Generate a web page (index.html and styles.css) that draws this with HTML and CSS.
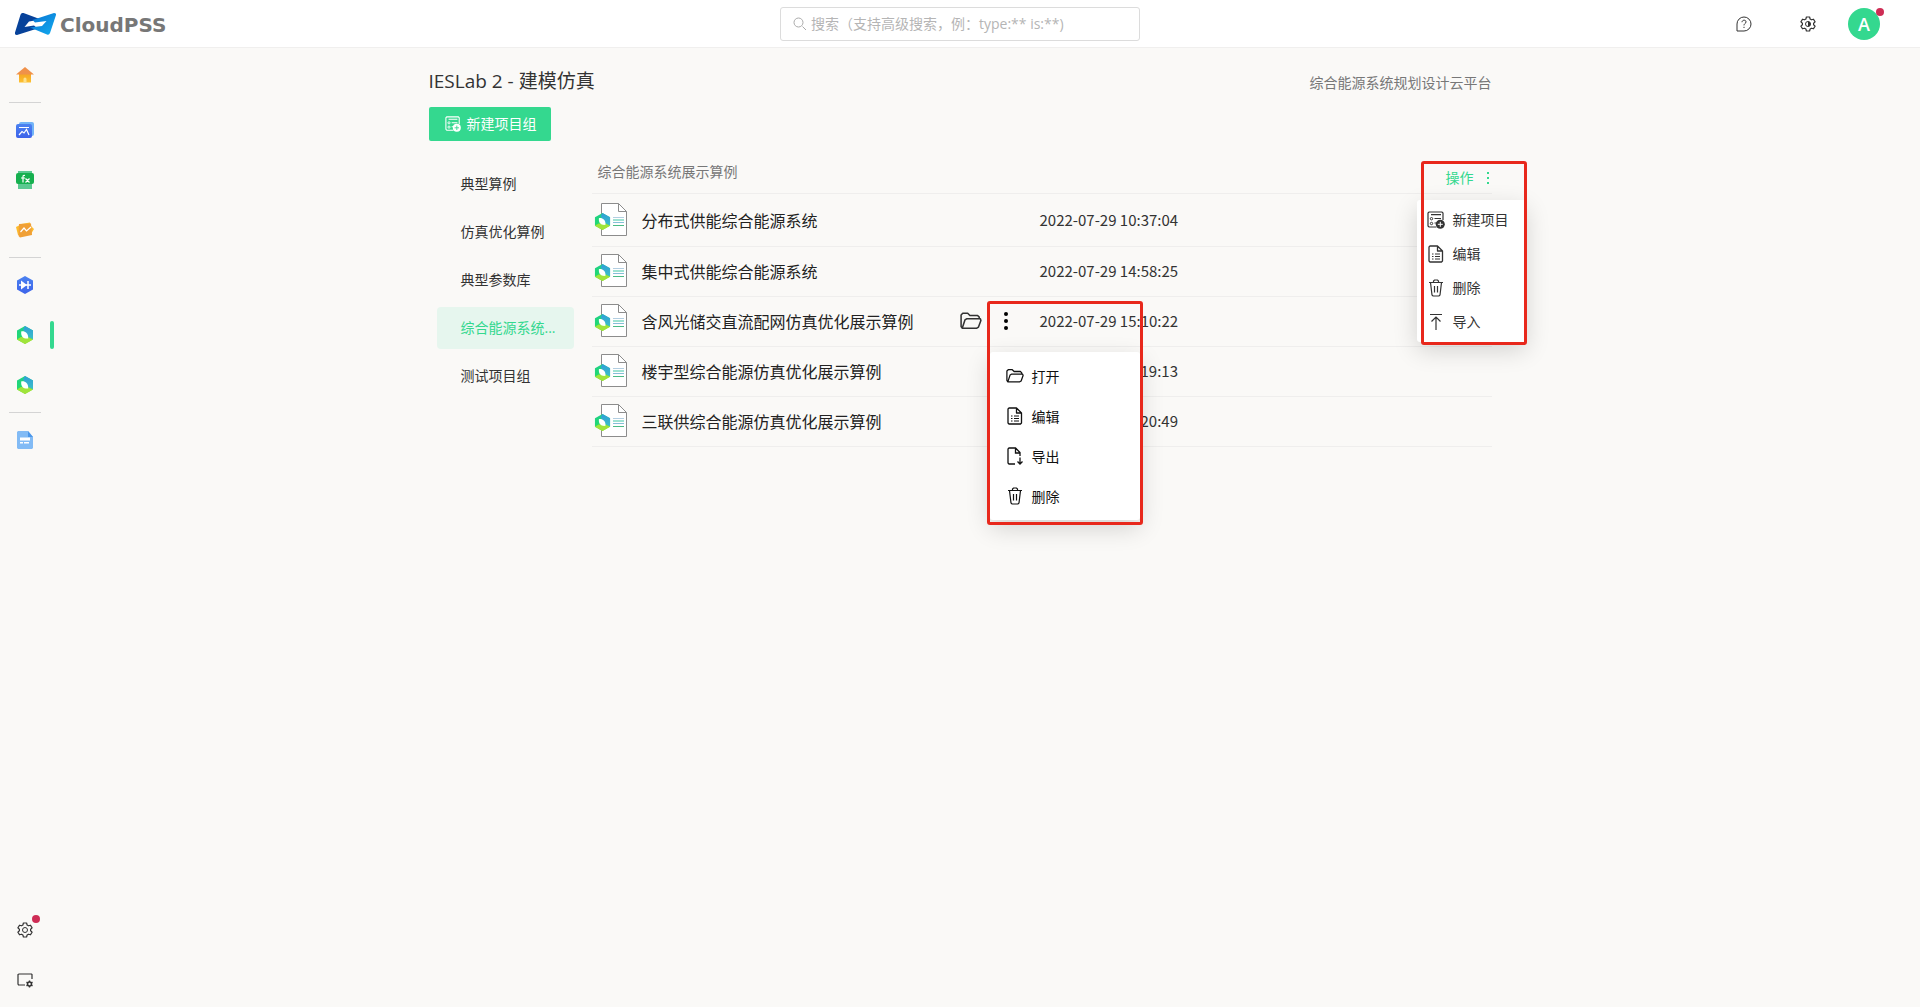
FILE: index.html
```html
<!DOCTYPE html>
<html lang="zh-CN">
<head>
<meta charset="utf-8">
<title>CloudPSS - IESLab 2</title>
<link rel="stylesheet" href="styles.css">
</head>
<body>
<svg class="defs" aria-hidden="true">
  <defs>
    <linearGradient id="leafL" x1="0" y1="0" x2="0.3" y2="1"><stop offset="0" stop-color="#1fd08a"/><stop offset=".6" stop-color="#22d873"/><stop offset="1" stop-color="#8be03a"/></linearGradient>
    <linearGradient id="leafR" x1="0" y1="0" x2="0" y2="1"><stop offset="0" stop-color="#2e9fd8"/><stop offset="1" stop-color="#3cbfc6"/></linearGradient>
    <linearGradient id="house" x1="0" y1="0" x2="0" y2="1"><stop offset="0" stop-color="#f5a623"/><stop offset="1" stop-color="#fdc131"/></linearGradient>
    <linearGradient id="blue" x1="0" y1="0" x2="0" y2="1"><stop offset="0" stop-color="#4b82f0"/><stop offset="1" stop-color="#3d63ea"/></linearGradient>
    <linearGradient id="cyan" x1="0" y1="0" x2="1" y2="1"><stop offset="0" stop-color="#0a6fd0"/><stop offset="1" stop-color="#12aef0"/></linearGradient>
    <symbol id="i-leaf" viewBox="0 0 18 18"><path d="M9 0 17 4.600V13.400L9 18 1 13.400V4.600z" fill="url(#leafL)"/><path d="M9 0 17 4.600V13.400L11 10 7 3.500z" fill="url(#leafR)"/><path d="M1 13.400 5 11l7 .5 5 1.900L9 18z" fill="#a0e43a"/><path d="M5.200 5.500c3.500-.7 7.300 1.500 7 7-4.500.5-7.500-1.500-7-7z" fill="#fff"/></symbol>
    <symbol id="i-file" viewBox="0 0 34 34"><path d="M7.500.5h17l8 8v24h-25z" fill="#fff" stroke="#8c8c8c"/><path d="M24.500.5v8h8" fill="none" stroke="#8c8c8c"/><path d="M19 14.500h11" stroke="#b3cfe2"/><path d="M19 17h11" stroke="#9fe3d2" stroke-width="2"/><path d="M19 19.500h11" stroke="#86bfd8"/><path d="M19 22.500h11" stroke="#4cbb86"/><use href="#i-leaf" x="0" y="10" width="17" height="17"/></symbol>
    <symbol id="i-folder" viewBox="0 0 20 16"><path d="M2 14.500 1 13V2.500L2.500 1H7l2 2h7l1.500 1.500V6M2 14.500 4.500 7 6 6h12.500l.5 1.500-2.200 6-1.500 1H2z" fill="none" stroke="currentColor" stroke-width="1.400" stroke-linejoin="round"/></symbol>
    <symbol id="i-edit" viewBox="0 0 16 18"><path d="M2 1h7.500L14.500 6v10l-1 1H2l-1-1V2z M9.500 1v5h5" fill="none" stroke="currentColor" stroke-width="1.300" stroke-linejoin="round"/><path d="M4 9h1.500M7 9h5M4 11.500h1.500M7 11.500h5M4 14h1.500M7 14h5" stroke="currentColor"/></symbol>
    <symbol id="i-export" viewBox="0 0 16 18"><path d="M8 17H2l-1-1V2l1-1h6.500L13 5.500V9M8.500 1v5H13M13 10.500V17M10.500 14.500 13 17l2.500-2.500" fill="none" stroke="currentColor" stroke-width="1.300"/></symbol>
    <symbol id="i-trash" viewBox="0 0 16 18"><path d="M1 3.500h14M5.500 3.500V2l1-1h3l1 1v1.500M2.500 3.500 4 16l1 1h6l1-1 1.500-12.500M6.500 7v6.500M9.500 7v6.500" fill="none" stroke="currentColor" stroke-width="1.200"/></symbol>
    <symbol id="i-import" viewBox="0 0 16 18"><path d="M2 1.500h12M8 17V4M3.500 8.500 8 4l4.500 4.500" fill="none" stroke="currentColor" stroke-width="1.200"/></symbol>
    <symbol id="i-new" viewBox="0 0 18 18"><path d="M9.500 16H2l-1-1V2l1-1h13l1 1v7M4 3.700h10M7.500 7.500H14M7.500 12H10" fill="none" stroke="currentColor" stroke-width="1.200"/><circle cx="4.500" cy="7.700" r="1.200" fill="none" stroke="currentColor"/><circle cx="4.500" cy="12.500" r="1.200" fill="none" stroke="currentColor"/><circle cx="13.300" cy="13.300" r="4.500" fill="currentColor"/></symbol>
    <symbol id="i-gear" viewBox="0 0 16 16"><path d="M6.400 1h3.200l.5 2 1.400.8 2-.6 1.600 2.700-1.500 1.400v1.400l1.500 1.400-1.600 2.700-2-.6-1.400.8-.5 2H6.400l-.5-2-1.400-.8-2 .6L.9 10.100l1.500-1.400V7.300L.9 5.900l1.600-2.700 2 .6L5.900 3z" fill="none" stroke="currentColor" stroke-width="1.200" stroke-linejoin="round"/><circle cx="8" cy="8" r="2.500" fill="none" stroke="currentColor"/></symbol>
  </defs>
</svg>

<header class="topbar">
  <a class="brand" href="#">
    <svg class="brand-mark" viewBox="0 0 41 22"><path d="M8.500 0 26 6.500 14 8.500 9.500 14 19 12.500 22.500 15.500 2 22Q-.5 22 0 19.500L5.500 1.800Q6.500-.4 8.500 0z" fill="#07429a"/><path d="M39 0Q41.500 0 41 2L35 20Q34 22.500 32 21.500L15 14.500 27 13 31.500 8 20 9.500 17.500 7z" fill="url(#cyan)"/></svg>
    <span class="brand-word">CloudPSS</span>
  </a>
  <label class="search"><svg viewBox="0 0 14 14"><path d="M9.500 9.500 13 13" stroke="currentColor"/><circle cx="5.500" cy="5.500" r="4.500" fill="none" stroke="currentColor"/></svg><input type="search" aria-label="搜索" placeholder="搜索（支持高级搜索，例：type:** is:**)"></label>
  <div class="tools">
    <button class="tool" aria-label="帮助"><svg viewBox="0 0 16 16"><path d="M1 15V8a7 7 0 1 1 7 7z" fill="none" stroke="currentColor"/><path d="M6 6.200C6 3.500 10.200 3.600 10 6c-.1 1.500-2 1.500-2 3.400M8 10.800V12" fill="none" stroke="currentColor"/></svg></button>
    <button class="tool" aria-label="主题"><svg viewBox="0 0 16 16"><use href="#i-gear"/><path d="M8 5.500a2.500 2.500 0 0 1 0 5z" fill="currentColor"/></svg></button>
    <button class="avatar" aria-label="账户">A<i class="badge"></i></button>
  </div>
</header>

<div class="shell">
  <nav class="rail" aria-label="应用">
    <a href="#" aria-label="首页"><svg viewBox="0 0 18 18"><path d="M3 8h12v8.500H3z" fill="url(#house)"/><path d="M9 1 18 8.500H0z" fill="#f0914a"/><path d="M7.500 16.500V13a1.500 1.500 0 0 1 3 0v3.500z" fill="#fde08a"/></svg></a>
    <hr>
    <a href="#" aria-label="模型"><svg viewBox="0 0 18 18"><rect x="3" y="1" width="15" height="14" rx="2" fill="#72b4f7"/><rect y="3" width="16" height="14" rx="2" fill="url(#blue)"/><path d="M3 6.500h10M3 14l3-3.500 2 1.500 2.500-3.500 2.500 5.500" fill="none" stroke="#fff" stroke-width="1.200"/></svg></a>
    <a href="#" aria-label="函数"><svg viewBox="0 0 18 18"><path d="M2 0h14v18H2z" fill="#5bc991"/><rect y="2" width="18" height="11" rx="2" fill="#16b04f"/><path d="M9 4.500C7 4 7 5 7 6v5.500M5 7h4M9.500 7.500l4 4M13.500 7.500l-4 4" fill="none" stroke="#fff" stroke-width="1.200"/></svg></a>
    <a href="#" aria-label="数据"><svg viewBox="0 0 18 18"><path d="M5 3 14 1.500 15 5 18 8 15 13 5 15z" fill="#fdbb2c"/><path d="M0 6 3 4.500 4 14 2 14z" fill="#fdbb2c"/><path d="M3 3 15 2.500 16 14 4 16.500 2.500 15z" fill="#f0a036"/><path d="M4.500 11l3.500-4L10.500 10l4.500-4" fill="none" stroke="#fff" stroke-width="1.200"/></svg></a>
    <hr>
    <a href="#" aria-label="EMTLab"><svg viewBox="0 0 18 18"><path d="M9 0 17 4.600v8.800L9 18 1 13.400V4.600z" fill="url(#blue)"/><path d="M5 4.500 11 9l-6 4.500z" fill="#fff"/><path d="M3 9h12M12 5v8" stroke="#fff" stroke-width="1.500"/></svg></a>
    <a href="#" class="current" aria-label="IESLab 建模仿真" aria-current="page"><svg><use href="#i-leaf"/></svg></a>
    <a href="#" aria-label="IESLab 规划设计"><svg><use href="#i-leaf"/></svg></a>
    <hr>
    <a href="#" aria-label="文档"><svg viewBox="0 0 18 18"><path d="M2 0h10l5 6v11l-1 1H2l-1-1V1z" fill="#82bbf5"/><path d="M12 0v6h5z" fill="#4c97ea"/><path d="M4 8h10" stroke="#fff" stroke-width="3"/><path d="M4 11.800h3M8 11.800h5" stroke="#fff" stroke-width="1.500"/></svg></a>
    <a href="#" class="bottom" aria-label="设置"><svg class="line" viewBox="0 0 16 16"><use href="#i-gear"/></svg><i class="badge"></i></a>
    <a href="#" aria-label="工作区"><svg class="line" viewBox="0 0 16 16"><path d="M8 13H1.500L1 12V2.500L2 2h12.500l.5.500V7" fill="none" stroke="currentColor" stroke-width="1.200"/><circle cx="12.500" cy="12" r="2" fill="none" stroke="currentColor" stroke-width="1.600"/><path d="M12.500 8.500v1.500M12.500 14v1.500M9.500 10.200l1.300.8M14.200 13l1.300.8M9.500 13.800l1.300-.8M14.200 11l1.300-.8" stroke="currentColor" stroke-width="1.400"/></svg></a>
  </nav>

  <main class="page">
    <div class="page-head"><h1>IESLab 2 - 建模仿真</h1><p>综合能源系统规划设计云平台</p></div>
    <button class="primary"><svg viewBox="0 0 18 18"><use href="#i-new"/><path d="M10.800 13.300h5M13.300 10.800v5" stroke="#34d88f"/></svg>新建项目组</button>
    <div class="columns">
      <nav class="groups" aria-label="项目组">
        <a href="#">典型算例</a>
        <a href="#">仿真优化算例</a>
        <a href="#">典型参数库</a>
        <a href="#" class="selected">综合能源系统...</a>
        <a href="#">测试项目组</a>
      </nav>
      <section class="list">
        <div class="list-head">
          <h2>综合能源系统展示算例</h2>
          <div class="ops">
            <button class="ops-button">操作<svg viewBox="0 0 4 14"><path d="M1 1h2v2H1zM1 6h2v2H1zM1 11h2v2H1z" fill="currentColor"/></svg></button>
            <div class="ops-menu menu">
              <button><svg viewBox="0 0 18 18"><use href="#i-new"/><path d="M10.800 13.300h5M13.300 10.800v5" stroke="#fff"/></svg>新建项目</button>
              <button><svg><use href="#i-edit"/></svg>编辑</button>
              <button><svg><use href="#i-trash"/></svg>删除</button>
              <button><svg><use href="#i-import"/></svg>导入</button>
            </div>
            <div class="frame ops-frame"></div>
          </div>
        </div>
        <table class="files">
          <colgroup><col class="c-name"><col class="c-act"><col></colgroup>
          <tbody>
            <tr><td><a class="file" href="#"><svg><use href="#i-file"/></svg>分布式供能综合能源系统</a></td><td></td><td>2022-07-29 10:37:04</td></tr>
            <tr><td><a class="file" href="#"><svg><use href="#i-file"/></svg>集中式供能综合能源系统</a></td><td></td><td>2022-07-29 14:58:25</td></tr>
            <tr><td><a class="file" href="#"><svg><use href="#i-file"/></svg>含风光储交直流配网仿真优化展示算例</a></td>
              <td><div class="acts">
                <button class="icon-button" aria-label="打开"><svg class="open"><use href="#i-folder"/></svg></button>
                <button class="icon-button" aria-label="更多"><svg class="dots" viewBox="0 0 4 18"><circle cx="2" cy="2" r="2"/><circle cx="2" cy="9" r="2"/><circle cx="2" cy="16" r="2"/></svg></button>
                <div class="row-menu menu">
                  <button><svg><use href="#i-folder"/></svg>打开</button>
                  <button><svg><use href="#i-edit"/></svg>编辑</button>
                  <button><svg><use href="#i-export"/></svg>导出</button>
                  <button><svg><use href="#i-trash"/></svg>删除</button>
                </div>
                <div class="frame row-frame"></div>
              </div></td><td>2022-07-29 15:10:22</td></tr>
            <tr><td><a class="file" href="#"><svg><use href="#i-file"/></svg>楼宇型综合能源仿真优化展示算例</a></td><td></td><td class="behind">19:13</td></tr>
            <tr><td><a class="file" href="#"><svg><use href="#i-file"/></svg>三联供综合能源仿真优化展示算例</a></td><td></td><td class="behind">20:49</td></tr>
          </tbody>
        </table>
      </section>
    </div>
  </main>
</div>
</body>
</html>
```

FILE: styles.css
```css
* { box-sizing: border-box; }
body {
  margin: 0;
  min-height: 100vh;
  display: flex;
  flex-direction: column;
  background: #faf9f7;
  color: #333;
  font: 14px/20px "Open Sans", "Noto Sans CJK SC", sans-serif;
}
button { padding: 0; border: 0; background: none; color: inherit; font: inherit; cursor: pointer; }
a { color: inherit; text-decoration: none; }
h1, h2, p { margin: 0; font-weight: 400; }
svg { display: block; flex: none; }
.defs { position: absolute; width: 0; height: 0; }

.badge { position: absolute; width: 8px; height: 8px; border-radius: 50%; background: #ce2d55; }

/* top bar */
.topbar {
  display: grid;
  grid-template-columns: 1fr 360px 1fr;
  align-items: center;
  height: 48px;
  padding: 0 15px;
  background: #fff;
  border-bottom: 1px solid #f0efee;
  column-gap: 16px;
}
.brand { display: flex; align-items: center; gap: 4px; }
.brand-mark { width: 41px; height: 22px; }
.brand-word { padding-top: 2px; color: #777; font: 700 20px/24px "DejaVu Sans", sans-serif; }
.search {
  display: flex;
  align-items: center;
  gap: 4px;
  height: 34px;
  padding: 0 12px;
  border: 1px solid #dcdcdc;
  border-radius: 3px;
  color: #aaa;
}
.search svg { width: 14px; height: 14px; }
.search input { flex: 1; min-width: 0; padding: 0; border: 0; outline: 0; background: none; font: inherit; }
.search input::placeholder { color: #b5b5b5; opacity: 1; }
.tools { display: flex; justify-content: flex-end; align-items: center; padding-right: 25px; }
.tool { display: grid; place-items: center; width: 64px; height: 46px; }
.tool svg { width: 16px; height: 16px; }
.avatar {
  position: relative;
  width: 32px;
  height: 32px;
  margin-left: 8px;
  border-radius: 50%;
  background: #34d88f;
  color: #fff;
  font-size: 18px;
  font-weight: 600;
}
.avatar .badge { top: 0; right: -4px; }

/* application rail */
.shell { flex: 1; display: flex; padding-right: 54px; }
.rail { display: flex; flex-direction: column; width: 54px; padding: 2px 0; }
.rail a { position: relative; display: grid; place-items: center; width: 50px; height: 50px; }
.rail svg { width: 18px; height: 18px; }
.rail svg.line { width: 16px; height: 16px; }
.rail hr { width: 32px; height: 1px; margin: 2px 0 2px 9px; border: 0; background: #d4d4d4; }
.rail .current::after {
  content: "";
  position: absolute;
  right: -4px;
  top: 11px;
  width: 4px;
  height: 28px;
  border-radius: 2px;
  background: #34d88f;
}
.rail .bottom { margin-top: auto; }
.rail .badge { top: 10px; right: 10px; }

/* project page */
.page { flex: 0 1 1063px; margin: 0 auto; padding: 20px 0; }
.page-head { display: flex; justify-content: space-between; align-items: flex-end; height: 26px; }
.page-head h1 { font-size: 19px; line-height: 26px; }
.page-head p { color: #777; line-height: 22px; }
.primary {
  display: flex;
  align-items: center;
  gap: 6px;
  height: 34px;
  margin-top: 13px;
  padding: 0 14px 0 16px;
  border-radius: 2px;
  background: #34d88f;
  color: #fff;
}
.primary svg { width: 16px; height: 16px; }
.columns { display: flex; gap: 18px; margin-top: 21px; }
.groups { display: flex; flex-direction: column; gap: 6px; width: 145px; padding: 1px 0 0 8px; }
.groups a {
  height: 42px;
  padding: 0 16px 0 24px;
  border-radius: 4px;
  line-height: 42px;
  white-space: nowrap;
}
.groups .selected { background: #e6f6ee; color: #34d88f; }
.list { flex: 1; min-width: 0; }
.list-head {
  display: flex;
  justify-content: space-between;
  height: 32px;
  margin-bottom: 2px;
  padding-left: 6px;
  border-bottom: 1px solid #efeeed;
}
.list-head h2 { font-size: 14px; line-height: 20px; color: #777; }
.ops { position: relative; }
.ops-button { display: flex; align-items: center; gap: 12px; height: 32px; padding-right: 2px; color: #34d88f; }
.ops-button svg { width: 4px; height: 14px; }

.files { width: 100%; table-layout: fixed; border-collapse: collapse; }
.c-name { width: 360px; }
.c-act { width: 88px; }
.files td {
  height: 50px;
  padding: 0 0 1px;
  border-bottom: 1px solid #efeeed;
  font-family: "Noto Sans CJK SC", sans-serif;
  font-size: 15px;
  white-space: nowrap;
}
.files .behind { padding-left: 101px; }
.file { display: flex; align-items: center; gap: 14px; padding-left: 2px; font-size: 16px; color: #222; }
.file svg { width: 34px; height: 34px; }
.acts { position: relative; display: flex; gap: 14px; padding-left: 8px; font-size: 14px; }
.icon-button { display: grid; place-items: center; min-width: 20px; height: 34px; }
.open { width: 22px; height: 18px; }
.dots { width: 4px; height: 18px; }

/* menus and the frames round them */
.menu {
  position: absolute;
  z-index: 1;
  border-radius: 3px;
  background: #fff;
  box-shadow: 0 8px 24px rgba(0, 0, 0, .16);
}
.menu button { display: flex; align-items: center; gap: 8px; width: 100%; }
.menu svg { width: 18px; height: 18px; }
.ops-menu { top: 38px; right: -34px; width: 109px; padding: 3px 0; }
.ops-menu button { height: 34px; padding-left: 10px; }
.row-menu { top: 48px; left: 38px; width: 150px; padding: 4px 0; }
.row-menu button { height: 40px; padding-left: 16px; color: #111; }
.frame { position: absolute; z-index: 2; border: 3px solid #e8281c; border-radius: 3px; pointer-events: none; }
.ops-frame { top: -1px; right: -35px; width: 106px; height: 184px; }
.row-frame { top: -3px; left: 35px; width: 156px; height: 224px; }
```
